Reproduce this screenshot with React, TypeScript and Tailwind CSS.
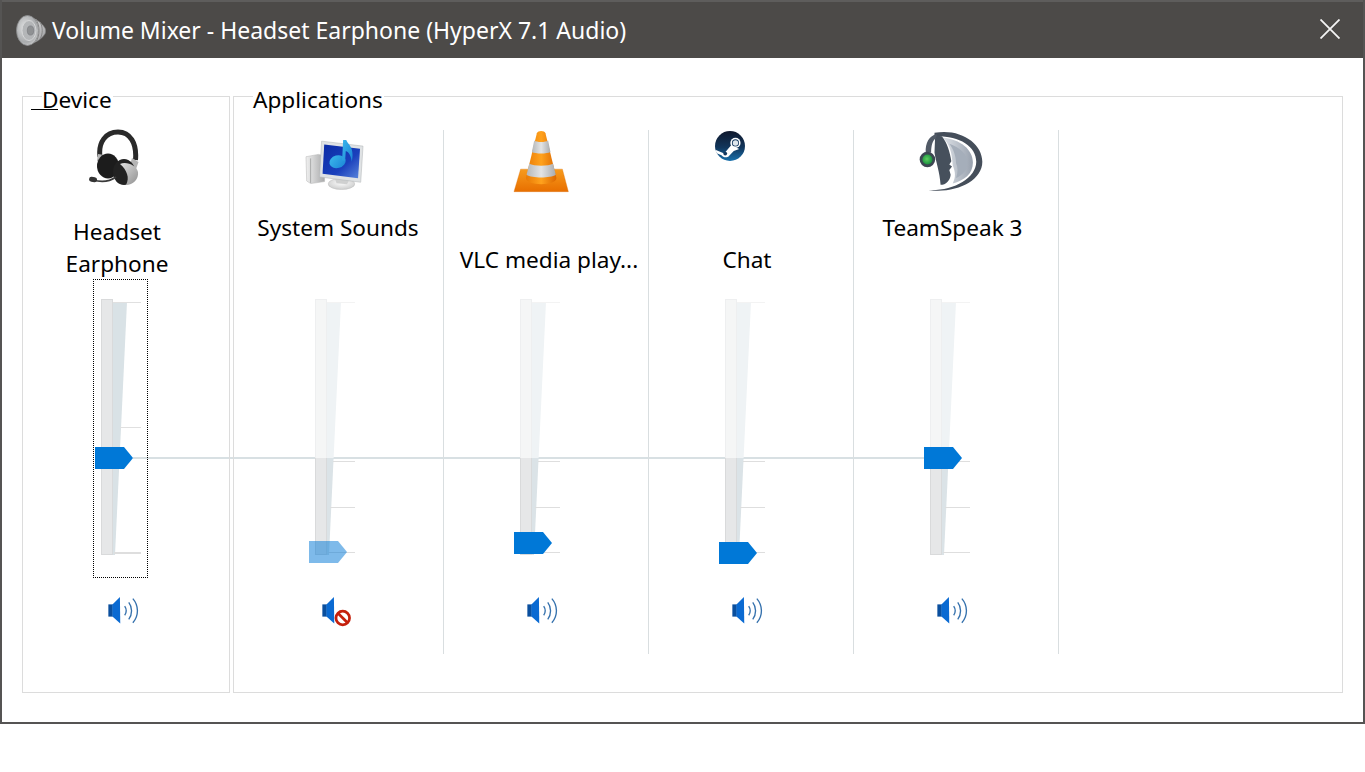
import React from "react";

function TitleSpeaker() {
  return (
    <svg width="30" height="31" viewBox="0 0 30 31" className="shrink-0">
      <defs>
        <radialGradient id="tsA" cx="0.4" cy="0.4" r="0.75">
          <stop offset="0" stopColor="#e4e5e6" />
          <stop offset="0.65" stopColor="#a9abad" />
          <stop offset="1" stopColor="#dcdddd" />
        </radialGradient>
        <linearGradient id="tsB" x1="0" y1="0" x2="1" y2="1">
          <stop offset="0" stopColor="#eeeeee" />
          <stop offset="1" stopColor="#97989a" />
        </linearGradient>
      </defs>
      <path d="M11 1 C19 3 25 7 29 13 C30 15 30 17 29 19 C25 25 19 28 11 30 Z" fill="url(#tsB)" stroke="#777" strokeWidth="0.6" />
      <path d="M20 4 C24 11 24 20 20 27 M24 7 C27 12 27 19 24 24" stroke="#868686" strokeWidth="1" fill="none" />
      <ellipse cx="11.5" cy="15.5" rx="11" ry="15" fill="url(#tsA)" stroke="#8a8c8d" strokeWidth="0.8" />
      <ellipse cx="13" cy="15.5" rx="7" ry="10" fill="#b4b6b8" stroke="#d6d7d8" strokeWidth="1" />
      <ellipse cx="14.5" cy="15.5" rx="3.2" ry="4.6" fill="#8f9193" stroke="#74767a" strokeWidth="0.6" />
    </svg>
  );
}

function HeadsetIcon() {
  return (
    <svg width="50" height="58" viewBox="0 0 50 58">
      <defs>
        <linearGradient id="hsA" x1="0" y1="0" x2="1" y2="1">
          <stop offset="0" stopColor="#e2e2e2" />
          <stop offset="1" stopColor="#8f8f8f" />
        </linearGradient>
      </defs>
      <path d="M11 29 C9 14 17 4 29 4 C41 4 48 15 46.5 32" fill="none" stroke="#2a2a2a" strokeWidth="5" />
      <path d="M43 30 L49.5 34 L46 44 L40 40 Z" fill="#b4b4b4" />
      <path d="M9 26 L15 27 L12 34 L8 33 Z" fill="#b5b5b5" />
      <ellipse cx="19" cy="38" rx="11" ry="12.5" fill="#1c1c1c" />
      <ellipse cx="35" cy="44" rx="11" ry="13" fill="#222" />
      <path d="M31 36 C38 33 48 38 49 44 C50 51 44 57 37 57 C41 50 38 42 31 36 Z" fill="url(#hsA)" />
      <path d="M27 49 C20 54 11 54 4 52" fill="none" stroke="#3a3a3a" strokeWidth="1.6" />
      <rect x="0" y="49" width="8" height="5" rx="2.5" fill="#333" transform="rotate(6 4 52)" />
    </svg>
  );
}

function SystemIcon() {
  return (
    <svg width="63" height="55" viewBox="45 45 190 165">
      <defs>
        <linearGradient id="syA" x1="0" y1="0" x2="1" y2="0">
          <stop offset="0" stopColor="#f0f0f0" />
          <stop offset="1" stopColor="#a8a9aa" />
        </linearGradient>
        <linearGradient id="syB" x1="0" y1="0" x2="1" y2="1">
          <stop offset="0" stopColor="#0a2aa5" />
          <stop offset="0.6" stopColor="#1a40bc" />
          <stop offset="1" stopColor="#5a86dc" />
        </linearGradient>
        <radialGradient id="syC" cx="0.5" cy="0.4" r="0.7">
          <stop offset="0" stopColor="#fdfdfd" />
          <stop offset="1" stopColor="#c4c5c5" />
        </radialGradient>
        <linearGradient id="syD" x1="0" y1="0" x2="1" y2="1">
          <stop offset="0" stopColor="#3cb8ec" />
          <stop offset="1" stopColor="#1a84d6" />
        </linearGradient>
      </defs>
      <path d="M48 95 L85 88 L104 92 L104 170 L62 176 L50 168 Z" fill="url(#syA)" stroke="#b5b5b5" strokeWidth="1.5" />
      <path d="M62 100 L62 174" stroke="#8d8e8f" strokeWidth="2" />
      <ellipse cx="155" cy="177" rx="40" ry="17" fill="url(#syC)" stroke="#bdbdbd" strokeWidth="1.5" />
      <path d="M135 160 L178 165 L172 178 L140 175 Z" fill="#cfd0d0" />
      <path d="M95 48 L220 63 L213 172 L89 156 Z" fill="#dfe2e4" stroke="#aeb2b5" strokeWidth="1.5" />
      <path d="M103 58 L211 71 L205 160 L98 146 Z" fill="url(#syB)" />
      <ellipse cx="143" cy="110" rx="25" ry="19" fill="url(#syD)" transform="rotate(-15 143 110)" />
      <path d="M157 106 L160 44 L168 40 C172 60 196 62 186 110 C184 92 176 80 168 78 L166 108 Z" fill="url(#syD)" />
    </svg>
  );
}

function VlcIcon() {
  return (
    <svg width="57" height="63" viewBox="38 30 170 190">
      <defs>
        <linearGradient id="vlA" x1="0" y1="0" x2="0" y2="1">
          <stop offset="0" stopColor="#f79b1c" />
          <stop offset="1" stopColor="#e86f00" />
        </linearGradient>
        <linearGradient id="vlB" x1="0" y1="0" x2="1" y2="0">
          <stop offset="0" stopColor="#e97a05" />
          <stop offset="0.5" stopColor="#ffa21d" />
          <stop offset="1" stopColor="#dc6700" />
        </linearGradient>
        <linearGradient id="vlC" x1="0" y1="0" x2="1" y2="0">
          <stop offset="0" stopColor="#b5b7b8" />
          <stop offset="0.5" stopColor="#e3e4e5" />
          <stop offset="1" stopColor="#a9abad" />
        </linearGradient>
      </defs>
      <path d="M60 148 L186 148 L204 216 L40 216 Z" fill="url(#vlA)" stroke="#d96a05" strokeWidth="1" />
      <path d="M109 40 C112 31 132 31 135 40 L168 175 C168 200 76 200 76 175 Z" fill="url(#vlB)" />
      <path d="M101 62 C108 68 136 68 143 62 L150 96 C140 102 104 102 94 96 Z" fill="url(#vlC)" />
      <path d="M86 132 C100 140 144 140 158 132 L166 165 C150 176 94 176 78 165 Z" fill="url(#vlC)" />
    </svg>
  );
}

function SteamIcon() {
  return (
    <svg width="30" height="30" viewBox="645 33 88 88">
      <defs>
        <linearGradient id="stA" x1="0" y1="0" x2="0" y2="1">
          <stop offset="0" stopColor="#10182c" />
          <stop offset="0.55" stopColor="#11365c" />
          <stop offset="1" stopColor="#1870ac" />
        </linearGradient>
      </defs>
      <circle cx="689" cy="77" r="44" fill="url(#stA)" />
      <path d="M646 88 L672 99 L693 74 L716 86 L700 92 L686 106 C680 113 668 110 664 104 L650 98 Z" fill="#fff" />
      <circle cx="705" cy="68" r="15" fill="#fff" />
      <circle cx="705" cy="68" r="10.5" fill="#15395f" />
      <circle cx="705" cy="68" r="8" fill="#dfe6ec" />
      <circle cx="675" cy="99" r="5.5" fill="#15395f" />
    </svg>
  );
}

function TeamSpeakIcon() {
  return (
    <svg width="64" height="63" viewBox="42 28 190 182">
      <defs>
        <radialGradient id="tkA" cx="0.45" cy="0.45" r="0.6">
          <stop offset="0" stopColor="#5fd060" />
          <stop offset="1" stopColor="#148a3c" />
        </radialGradient>
        <linearGradient id="tkB" x1="0" y1="0" x2="1" y2="0">
          <stop offset="0" stopColor="#dfe3e8" />
          <stop offset="1" stopColor="#98a1ae" />
        </linearGradient>
      </defs>
      <path d="M88 34 C165 20 230 65 230 120 C230 178 150 215 70 204 C140 208 212 170 212 120 C212 72 160 42 88 44 Z" fill="#454e5a" />
      <path d="M112 48 C166 54 202 84 202 122 C202 156 176 176 142 184 C152 165 150 150 142 130 C140 92 132 66 112 48 Z" fill="url(#tkB)" />
      <path d="M132 66 C162 76 186 96 186 122 C186 146 170 160 152 168 C158 150 158 136 152 124 C152 102 144 82 132 66 Z" fill="#a5aeba" />
      <path d="M90 42 L110 44 C126 64 134 92 138 118 L132 128 L140 134 L132 144 L136 158 C134 176 122 188 106 188 C104 150 92 120 88 92 Z" fill="#46505c" />
      <path d="M62 92 C60 66 72 40 96 38 L92 50 C82 56 78 74 78 92 Z" fill="#515a66" />
      <circle cx="67" cy="113" r="23" fill="#3d4652" />
      <circle cx="67" cy="113" r="15" fill="url(#tkA)" />
    </svg>
  );
}

function SpeakerIcon({ muted }: { muted: boolean }) {
  return (
    <svg width="34" height="29" viewBox="66 198 100 84" className="overflow-visible">
      <rect x="70" y="222" width="13" height="36" fill="#0a4f9e" />
      <path d="M82 222 L104 200 L105 278 L82 258 Z" fill="#0a6ad2" />
      {muted ? (
        <g>
          <circle cx="130" cy="262" r="20" fill="#fff" stroke="#c5200c" strokeWidth="8" />
          <path d="M116 248 L144 276" stroke="#c5200c" strokeWidth="8" />
        </g>
      ) : (
        <g fill="none" stroke="#3571ad" strokeWidth="4">
          <path d="M118 227 C124 235 124 247 118 254" />
          <path d="M130 216 C141 230 141 252 130 266" />
          <path d="M142 205 C160 226 160 255 142 276" />
        </g>
      )}
    </svg>
  );
}

type SliderProps = { thumbClass: string; master: boolean; faded: boolean };

function Slider({ thumbClass, master, faded }: SliderProps) {
  return (
    <div className="relative h-[256px] w-[12px]">
      <svg width="28" height="256" viewBox="0 0 28 256" className="absolute left-[12px] top-0">
        {master ? (
          <polygon points="0,3 14,3 2,256 0,256" fill="#d9e2e6" />
        ) : (
          <g>
            <polygon points="0,3 14,3 6.6,159 0,159" fill="#eff3f5" />
            <polygon points="0,159 6.6,159 2,256 0,256" fill="#dbe3e7" />
          </g>
        )}
      </svg>
      {master ? (
        <div className="absolute inset-0 border border-[#d9dadb] bg-[#e6e7e8]" />
      ) : (
        <div className="absolute inset-0 flex flex-col">
          <div className="h-[159px] border border-b-0 border-[#eeeff0] bg-[#f5f6f6]" />
          <div className="flex-1 border border-t-0 border-[#d9dadb] bg-[#e6e7e8]" />
        </div>
      )}
      {master ? (
        <>
          <div className="absolute left-[12px] top-[3px] h-[1px] w-[28px] bg-[#e0e0e0]" />
          <div className="absolute left-[19px] top-[128px] h-[1px] w-[21px] bg-[#e0e0e0]" />
          <div className="absolute left-[13px] top-[253px] h-[2px] w-[27px] bg-[#dedede]" />
        </>
      ) : (
        <>
          <div className="absolute left-[12px] top-[3px] h-[1px] w-[28px] bg-[#f3f3f3]" />
          <div className="absolute left-[18px] top-[162px] h-[1px] w-[22px] bg-[#dedede]" />
          <div className="absolute left-[15px] top-[208px] h-[1px] w-[25px] bg-[#dedede]" />
          <div className="absolute left-[13px] top-[253px] h-[1px] w-[27px] bg-[#dedede]" />
        </>
      )}
      <svg
        width="38"
        height="22"
        viewBox="0 0 38 22"
        className={`absolute left-[-6px] ${thumbClass} ${faded ? "opacity-50" : ""}`}
      >
        <polygon points="0,0 29,0 38,11 29,22 0,22" fill="#0078d7" />
      </svg>
    </div>
  );
}

type ChannelProps = {
  icon: React.ReactNode;
  iconClass: string;
  label: React.ReactNode;
  labelClass: string;
  thumbClass: string;
  colClass: string;
  master?: boolean;
  muted?: boolean;
};

function Channel({ icon, iconClass, label, labelClass, thumbClass, colClass, master = false, muted = false }: ChannelProps) {
  return (
    <div className={`flex h-[524px] shrink-0 flex-col ${colClass}`}>
      <div className={`h-[82px] ${iconClass}`}>{icon}</div>
      <div className={`h-[64px] whitespace-nowrap text-center text-[22.6px] leading-[32px] text-black ${labelClass}`}>
        {label}
      </div>
      <div className="relative ml-[76px] mt-[23px]">
        {master && (
          <div className="absolute left-[-8px] top-[-20px] h-[299px] w-[55px] border border-dotted border-black" />
        )}
        <Slider thumbClass={thumbClass} master={master} faded={muted} />
      </div>
      <div className="ml-[82px] mt-[41px] h-[29px]">
        <SpeakerIcon muted={muted} />
      </div>
    </div>
  );
}

function GroupBox({ title, className, legendClass, children }: { title: React.ReactNode; className: string; legendClass: string; children: React.ReactNode }) {
  return (
    <section className={`relative h-[597px] shrink-0 border border-[#dcdcdc] ${className}`}>
      <div className={`absolute top-[-13px] h-[32px] bg-white text-[22.6px] leading-[32px] text-black ${legendClass}`}>{title}</div>
      <div className="flex pt-[33px]">{children}</div>
    </section>
  );
}

export default function App() {
  return (
    <div className="h-[772px] w-[1365px] bg-white font-['Noto_Sans','Open_Sans',sans-serif]">
      <div className="flex h-[724px] flex-col border-x-2 border-b-2 border-[#555453] bg-white">
        <header className="flex h-[58px] shrink-0 items-center border-t-2 border-[#5e5d5c] bg-[#4c4a48] pl-[14px] pr-[23px] text-white">
          <TitleSpeaker />
          <h1 className="ml-[6px] flex-1 whitespace-nowrap text-[23px] font-normal leading-[32px]">
            Volume Mixer - Headset Earphone (HyperX 7.1 Audio)
          </h1>
          <svg width="20" height="20" viewBox="0 0 20 20" className="mb-[2px]">
            <path d="M0.5 0.5 L19.5 19.5 M19.5 0.5 L0.5 19.5" stroke="#f4f4f4" strokeWidth="1.8" fill="none" />
          </svg>
        </header>
        <main className="relative flex flex-1 gap-[3px] pl-[20px] pt-[38px]">
          <div className="absolute left-[131px] top-[399px] z-0 h-[2px] w-[792px] bg-[#d8e0e3]" />
          <GroupBox
            className="z-10 w-[208px]"
            legendClass="left-[19px] w-[71px]"
            title={
              <>
                <span className="absolute left-[-11px] top-[25px] h-[1px] w-[27px] bg-black" />
                Device
              </>
            }
          >
            <Channel
              master
              colClass="ml-[2px] w-[180px]"
              icon={<HeadsetIcon />}
              iconClass="ml-[64px] mt-[-2px] mb-[2px]"
              label={<>Headset<br />Earphone</>}
              labelClass="w-[184px] pt-[4px]"
              thumbClass="top-[148px]"
            />
          </GroupBox>
          <GroupBox className="z-10 w-[1110px]" legendClass="left-[19px] w-[131px]" title="Applications">
            <div className="flex pl-[5px]">
              <Channel
                muted
                colClass="w-[205px] border-r border-[#d9dee0]"
                icon={<SystemIcon />}
                iconClass="ml-[66px] pt-[10px]"
                label="System Sounds"
                labelClass="w-[198px]"
                thumbClass="top-[242px]"
              />
              <Channel
                colClass="w-[205px] border-r border-[#d9dee0]"
                icon={<VlcIcon />}
                iconClass="ml-[69px]"
                label="VLC media play..."
                labelClass="w-[210px] pt-[32px]"
                thumbClass="top-[233px]"
              />
              <Channel
                colClass="w-[205px] border-r border-[#d9dee0]"
                icon={<SteamIcon />}
                iconClass="ml-[66px] pt-[1px]"
                label="Chat"
                labelClass="w-[196px] pt-[32px]"
                thumbClass="top-[243px]"
              />
              <Channel
                colClass="w-[205px] border-r border-[#d9dee0]"
                icon={<TeamSpeakIcon />}
                iconClass="ml-[65px]"
                label="TeamSpeak 3"
                labelClass="w-[197px]"
                thumbClass="top-[148px]"
              />
            </div>
          </GroupBox>
        </main>
      </div>
    </div>
  );
}
